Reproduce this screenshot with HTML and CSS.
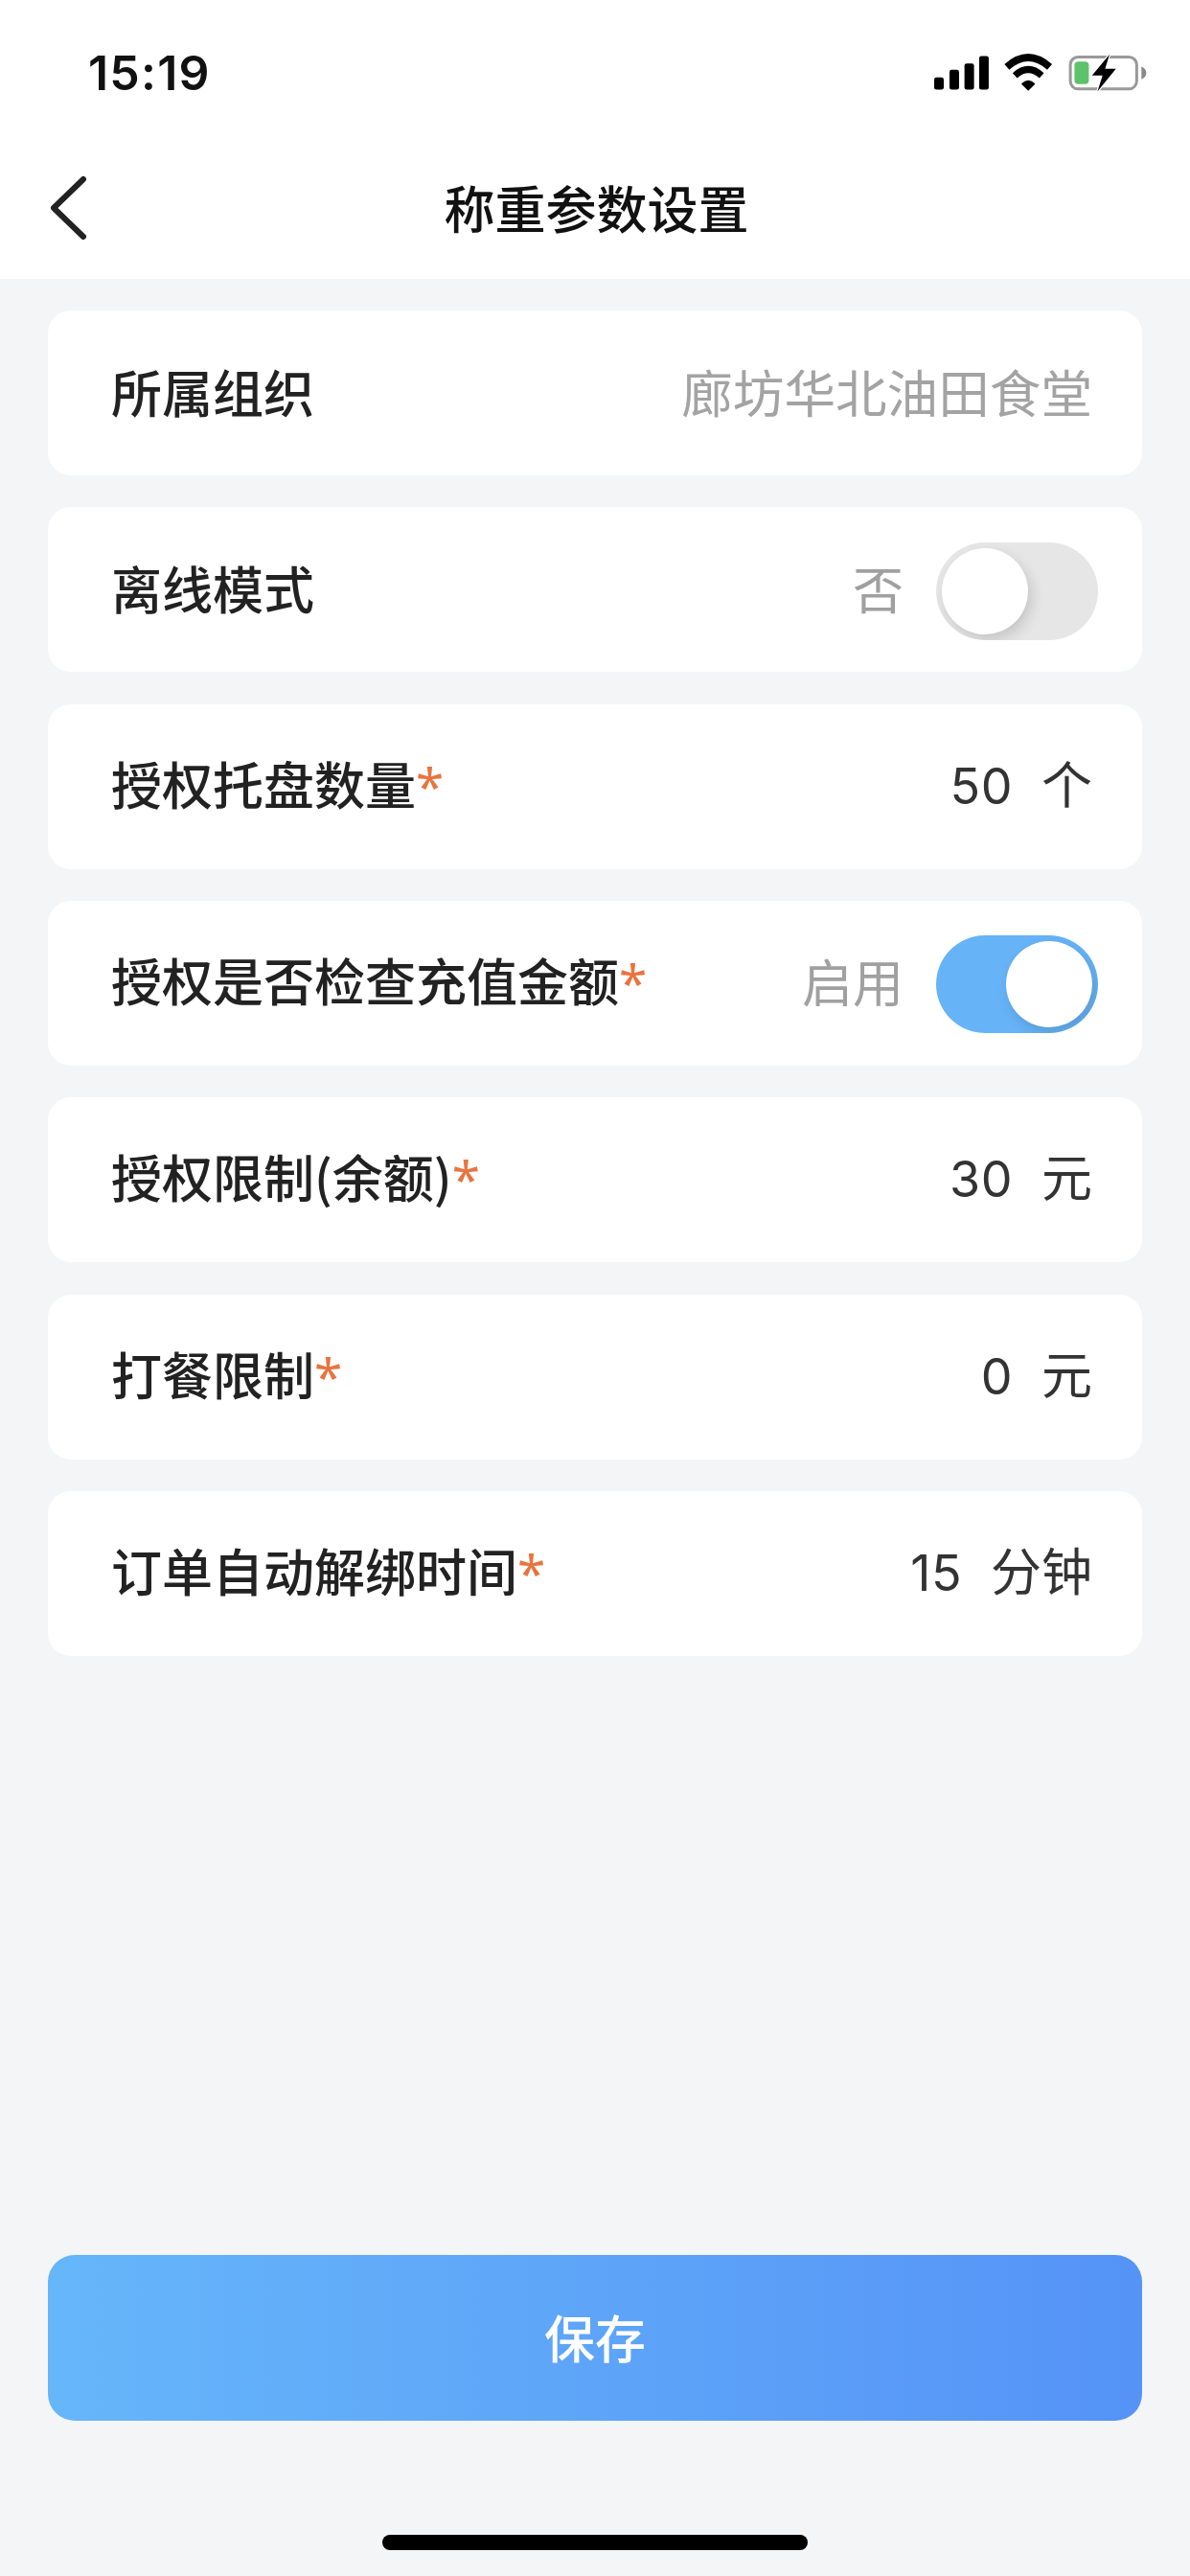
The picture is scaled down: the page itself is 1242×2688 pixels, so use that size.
FILE: index.html
```html
<!DOCTYPE html>
<html lang="zh-CN">
<head>
<meta charset="utf-8">
<title>称重参数设置</title>
<link rel="stylesheet" href="styles.css">
</head>
<body>
<div class="app">
  <header class="top">
    <div class="status">
      <span class="time">15:19</span>
      <svg class="status-icons" viewBox="100 75 670 125" width="223" height="42" aria-hidden="true">
        <rect x="100" y="152" width="30" height="38" rx="7" fill="#000"/>
        <rect x="148" y="128" width="30" height="62" rx="7" fill="#000"/>
        <rect x="195" y="108" width="30" height="82" rx="7" fill="#000"/>
        <rect x="241" y="85" width="30" height="105" rx="7" fill="#000"/>
        <path d="M328 119 Q395 60 462 119" fill="none" stroke="#000" stroke-width="23"/>
        <path d="M353 146 Q395 108 437 146" fill="none" stroke="#000" stroke-width="21"/>
        <path d="M373 172 Q395 150 417 172 L395 194 Z" fill="#000"/>
        <rect x="527" y="88" width="208" height="100" rx="24" fill="none" stroke="#999" stroke-width="9"/>
        <path d="M750 118 Q765 125 765 138 Q765 151 750 158 Z" fill="#888"/>
        <rect x="540" y="102" width="45" height="71" rx="12" fill="#5ec26a"/>
        <path d="M650 80 L595 146 L628 146 L612 196 L670 125 L636 125 Z" fill="#000" stroke="#fff" stroke-width="7" paint-order="stroke"/>
      </svg>
    </div>
    <nav class="nav">
      <svg class="back" viewBox="0 0 40 68" width="40" height="68" aria-hidden="true">
        <path d="M36 4 L5 34 L36 64" fill="none" stroke="#222" stroke-width="6" stroke-linecap="round" stroke-linejoin="round"/>
      </svg>
      <h1 class="title">称重参数设置</h1>
    </nav>
  </header>

  <main class="main">
    <section class="list">
      <div class="row">
        <span class="label">所属组织</span>
        <span class="value value-muted">廊坊华北油田食堂</span>
      </div>
      <div class="row">
        <span class="label">离线模式</span>
        <div class="control">
          <span class="state">否</span>
          <span class="switch"><span class="knob"></span></span>
        </div>
      </div>
      <div class="row">
        <span class="label">授权托盘数量<i class="req">*</i></span>
        <span class="value"><span class="num">50</span><span>个</span></span>
      </div>
      <div class="row">
        <span class="label">授权是否检查充值金额<i class="req">*</i></span>
        <div class="control">
          <span class="state">启用</span>
          <span class="switch switch-on"><span class="knob"></span></span>
        </div>
      </div>
      <div class="row">
        <span class="label">授权限制(余额)<i class="req">*</i></span>
        <span class="value"><span class="num">30</span><span>元</span></span>
      </div>
      <div class="row">
        <span class="label">打餐限制<i class="req">*</i></span>
        <span class="value"><span class="num">0</span><span>元</span></span>
      </div>
      <div class="row">
        <span class="label">订单自动解绑时间<i class="req">*</i></span>
        <span class="value"><span class="num">15</span><span>分钟</span></span>
      </div>
    </section>
    <button class="save" type="button">保存</button>
    <div class="home-bar"></div>
  </main>
</div>
</body>
</html>
```
FILE: styles.css
```css
* { box-sizing: border-box; }
html, body { margin: 0; padding: 0; }
body {
  width: 1242px;
  height: 2688px;
  background: #f3f5f7;
  font-family: "Noto Sans CJK SC", "Noto Sans", sans-serif;
  color: #222;
}
.app {
  display: flex;
  flex-direction: column;
  height: 2688px;
}
.top {
  background: #fff;
  height: 291px;
  display: flex;
  flex-direction: column;
}
.status {
  height: 146px;
  display: flex;
  align-items: flex-start;
  justify-content: space-between;
  padding: 55px 44px 0 92px;
}
.time {
  font-family: Inter, "Liberation Sans", sans-serif;
  font-size: 50px;
  font-weight: 600;
  line-height: 42px;
  color: #111;
  letter-spacing: 1.2px;
}
.status-icons { display: block; }
.nav {
  position: relative;
  height: 145px;
  padding: 0 0 6px 3px;
  display: flex;
  align-items: center;
  justify-content: center;
}
.back {
  position: absolute;
  left: 51px;
  top: 37px;
}
.title {
  margin: 0;
  font-size: 53px;
  font-weight: 500;
  line-height: 72px;
  color: #111;
}
.main {
  flex: 1;
  display: flex;
  flex-direction: column;
  padding: 33px 50px 27px;
}
.list {
  display: flex;
  flex-direction: column;
  gap: 33.33px;
}
.row {
  height: 172px;
  background: #fff;
  border-radius: 24px;
  display: flex;
  align-items: center;
  justify-content: space-between;
  padding: 0 46px 0 66px;
}
.label {
  padding-bottom: 5px;
  font-size: 53px;
  font-weight: 500;
  color: #222;
  line-height: 72px;
}
.req {
  font-family: "Noto Sans", sans-serif;
  font-style: normal;
  font-weight: 400;
  color: #e9733e;
}
.value {
  display: flex;
  align-items: baseline;
  gap: 30px;
  margin-right: 6px;
  padding-bottom: 5px;
  font-size: 53px;
  font-weight: 400;
  line-height: 72px;
  color: #333;
}
.value-muted {
  font-size: 53.6px;
  color: #a3a3a3;
}
.num {
  font-family: Inter, "Liberation Sans", sans-serif;
  font-size: 52px;
  font-weight: 400;
  letter-spacing: 0.5px;
}
.control {
  display: flex;
  align-items: center;
  gap: 34px;
}
.state {
  padding-bottom: 5px;
  font-size: 53px;
  line-height: 72px;
  color: #a0a0a0;
}
.switch {
  display: flex;
  justify-content: flex-start;
  width: 169px;
  height: 102px;
  margin-top: 3px;
  padding: 6px;
  border-radius: 51px;
  background: #e6e6e6;
  overflow: hidden;
}
.switch-on {
  justify-content: flex-end;
  background: #66b3f7;
}
.knob {
  width: 90px;
  height: 90px;
  border-radius: 50%;
  background: #fff;
  box-shadow: 4px 6px 14px rgba(0, 0, 0, 0.14);
}
.save {
  margin-top: auto;
  height: 173px;
  padding: 0 0 4px;
  border: 0;
  border-radius: 28px;
  background: linear-gradient(90deg, #66b6fa 0%, #5593f7 100%);
  color: #fff;
  font-family: inherit;
  font-size: 53px;
  font-weight: 500;
}
.home-bar {
  align-self: center;
  width: 444px;
  height: 16px;
  margin-top: 119px;
  border-radius: 8px;
  background: #000;
}
```
